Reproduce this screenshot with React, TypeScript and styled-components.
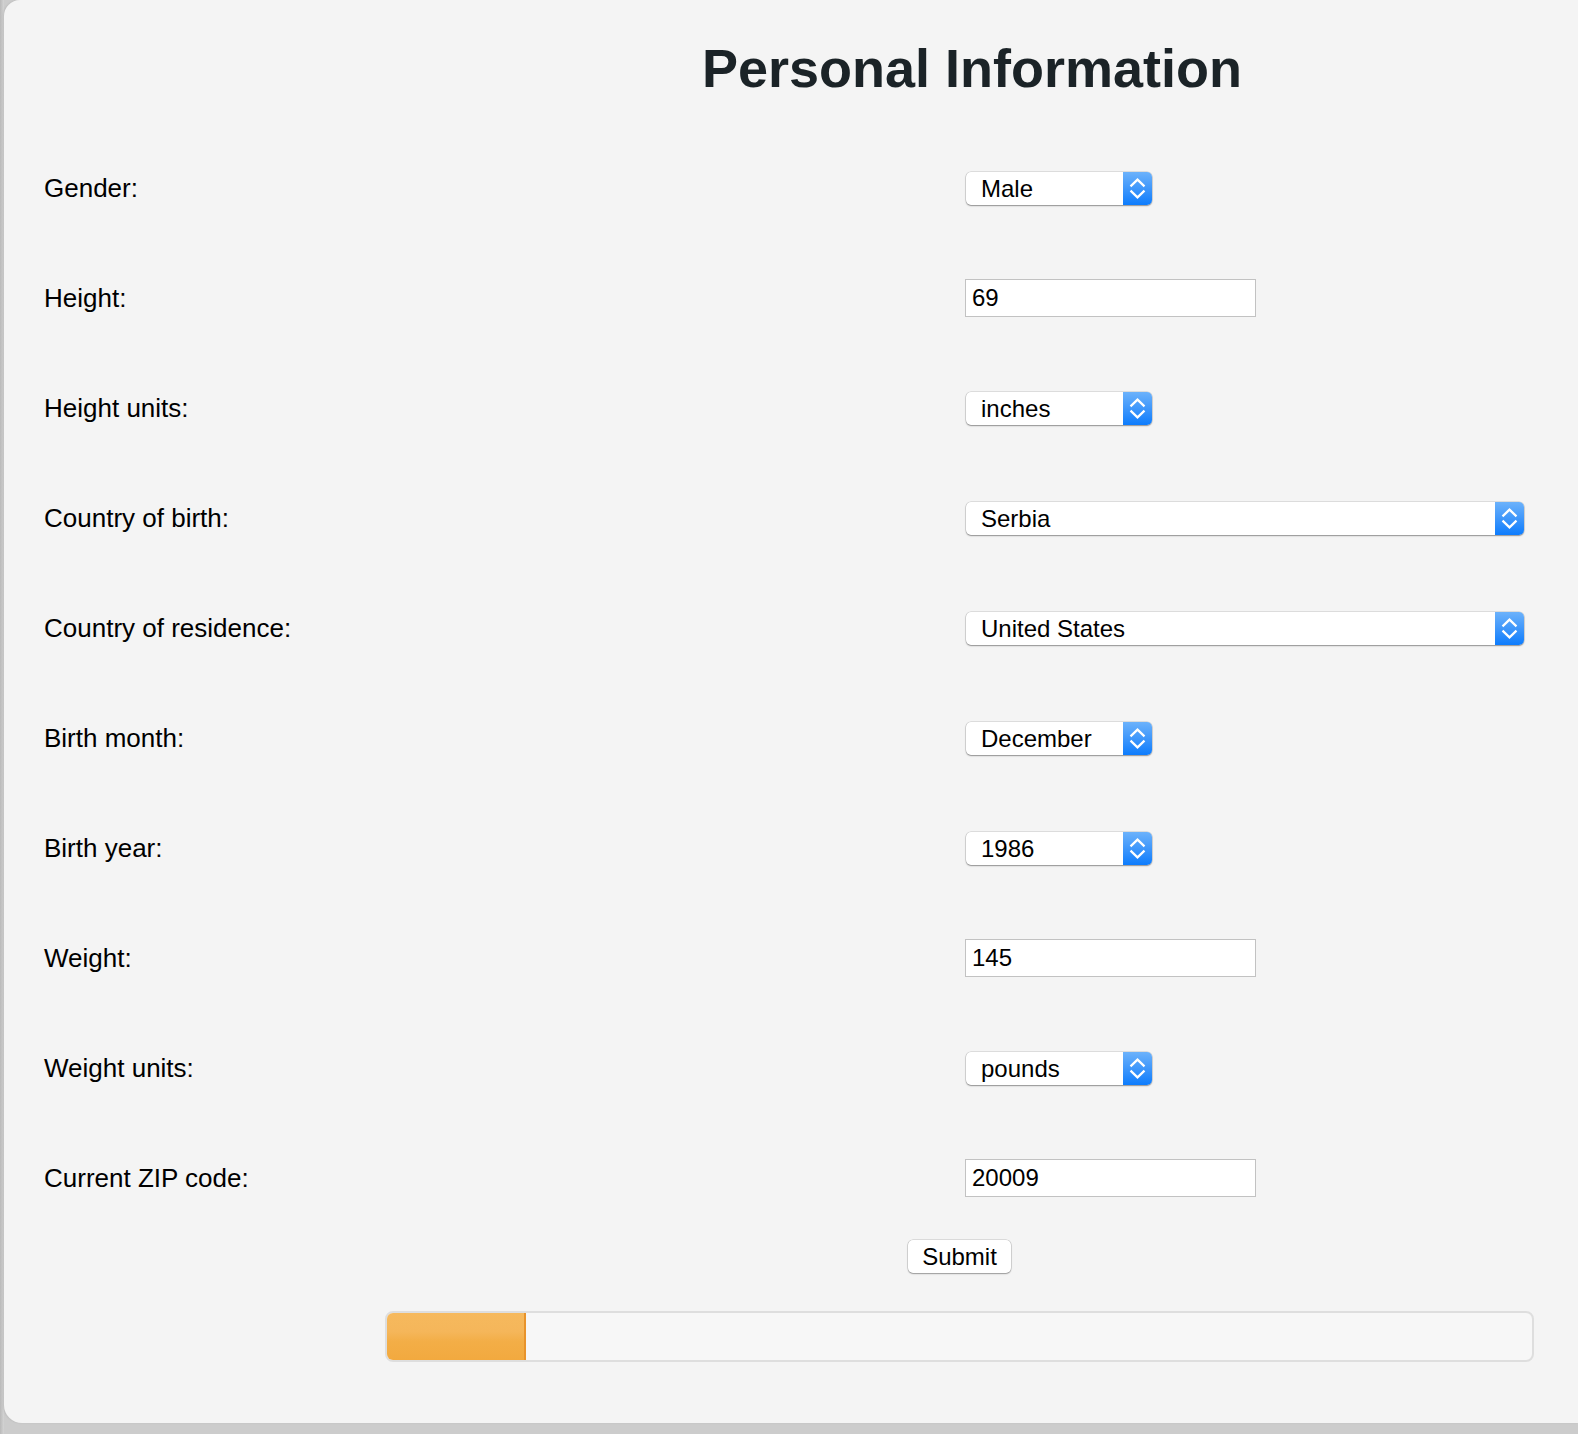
import React from "react";
import styled, { createGlobalStyle } from "styled-components";

const GlobalStyle = createGlobalStyle`
  html, body {
    margin: 0;
    padding: 0;
    background: #cccccc;
    font-family: "Liberation Sans", Arial, Helvetica, sans-serif;
  }
  * { box-sizing: border-box; }
`;

const Page = styled.div`
  width: 1578px;
  min-height: 1434px;
  padding: 0 0 11px 4px;
  background: linear-gradient(to right, #b9b9b9 0px, #d4d4d4 4px, #cccccc 4px);
`;

const Card = styled.div`
  background: #f4f4f4;
  border-radius: 16px 0 0 18px;
  padding: 38px 0 61px 40px;
  box-shadow: -1px 0 2px rgba(0, 0, 0, 0.08);
`;

const Title = styled.h1`
  margin: 0 0 0 322px;
  font-size: 54px;
  line-height: 60px;
  font-weight: 700;
  text-align: center;
  color: #1b2327;
`;

const Form = styled.div`
  margin-top: 35px;
  display: grid;
  grid-auto-rows: 110px;
`;

const Row = styled.div`
  display: grid;
  grid-template-columns: 922px 1fr;
  align-items: center;
`;

const Label = styled.label`
  font-size: 26px;
  line-height: 30px;
  color: #000;
`;

const SelectBox = styled.div<{ $wide?: boolean }>`
  display: flex;
  width: ${(p) => (p.$wide ? "558px" : "186px")};
  height: 33px;
  background: #ffffff;
  border-radius: 5px;
  overflow: hidden;
  box-shadow: 0 0 0 0.5px rgba(0, 0, 0, 0.18), 0 1px 1.5px rgba(0, 0, 0, 0.35);
`;

const SelectValue = styled.span`
  flex: 1;
  padding-left: 15px;
  font-size: 24px;
  line-height: 33px;
  color: #000;
  white-space: nowrap;
`;

const SelectArrow = styled.span`
  width: 29px;
  height: 33px;
  display: flex;
  background: linear-gradient(to bottom, #6cb2fb 0%, #3f97fb 50%, #0d7cfd 100%);
`;

const TextInput = styled.input`
  width: 291px;
  height: 38px;
  margin-left: -1px;
  border: 1px solid #c2c2c2;
  border-radius: 0;
  background: #ffffff;
  padding: 0 6px;
  font-family: "Liberation Sans", Arial, Helvetica, sans-serif;
  font-size: 24px;
  color: #000;
  outline: none;
`;

const Footer = styled.div`
  margin: 7px 0 0 341px;
  width: 1149px;
  display: flex;
  flex-direction: column;
  align-items: center;
  gap: 38px;
`;

const SubmitButton = styled.button`
  width: 103px;
  height: 33px;
  padding: 0;
  background: #ffffff;
  border: none;
  border-radius: 5px;
  box-shadow: 0 0 0 0.5px rgba(0, 0, 0, 0.2), 0 1px 1.5px rgba(0, 0, 0, 0.3);
  font-family: "Liberation Sans", Arial, Helvetica, sans-serif;
  font-size: 24px;
  color: #000;
`;

const Progress = styled.div`
  align-self: stretch;
  height: 51px;
  border: 2px solid #dedede;
  border-radius: 8px;
  background: #f7f7f7;
  overflow: hidden;
  display: flex;
`;

const ProgressFill = styled.div`
  height: 100%;
  border-right: 2px solid #e8932b;
  background: linear-gradient(
    to bottom,
    #f6b95d 0%,
    #f5b65a 40%,
    #f3ae47 60%,
    #f2a93f 100%
  );
`;

const Chevrons = () => (
  <svg width="29" height="33" viewBox="0 0 29 33" fill="none">
    <path
      d="M8.3 13.6 L14.5 7.6 L20.7 13.6"
      stroke="#ffffff"
      strokeWidth="2.2"
      strokeLinecap="square"
      strokeLinejoin="miter"
    />
    <path
      d="M8.3 19.4 L14.5 25.4 L20.7 19.4"
      stroke="#ffffff"
      strokeWidth="2.2"
      strokeLinecap="square"
      strokeLinejoin="miter"
    />
  </svg>
);

type Field =
  | { label: string; kind: "select"; value: string; wide?: boolean }
  | { label: string; kind: "input"; value: string };

const fields: Field[] = [
  { label: "Gender:", kind: "select", value: "Male" },
  { label: "Height:", kind: "input", value: "69" },
  { label: "Height units:", kind: "select", value: "inches" },
  { label: "Country of birth:", kind: "select", value: "Serbia", wide: true },
  { label: "Country of residence:", kind: "select", value: "United States", wide: true },
  { label: "Birth month:", kind: "select", value: "December" },
  { label: "Birth year:", kind: "select", value: "1986" },
  { label: "Weight:", kind: "input", value: "145" },
  { label: "Weight units:", kind: "select", value: "pounds" },
  { label: "Current ZIP code:", kind: "input", value: "20009" },
];

const progressPercent = 12.1;

export default function App() {
  return (
    <>
      <GlobalStyle />
      <Page>
        <Card>
          <Title>Personal Information</Title>
          <Form>
            {fields.map((f) => (
              <Row key={f.label}>
                <Label>{f.label}</Label>
                <div>
                  {f.kind === "select" ? (
                    <SelectBox $wide={f.wide}>
                      <SelectValue>{f.value}</SelectValue>
                      <SelectArrow>
                        <Chevrons />
                      </SelectArrow>
                    </SelectBox>
                  ) : (
                    <TextInput type="text" defaultValue={f.value} />
                  )}
                </div>
              </Row>
            ))}
          </Form>
          <Footer>
            <SubmitButton type="button">Submit</SubmitButton>
            <Progress>
              <ProgressFill style={{ width: `${progressPercent}%` }} />
            </Progress>
          </Footer>
        </Card>
      </Page>
    </>
  );
}
